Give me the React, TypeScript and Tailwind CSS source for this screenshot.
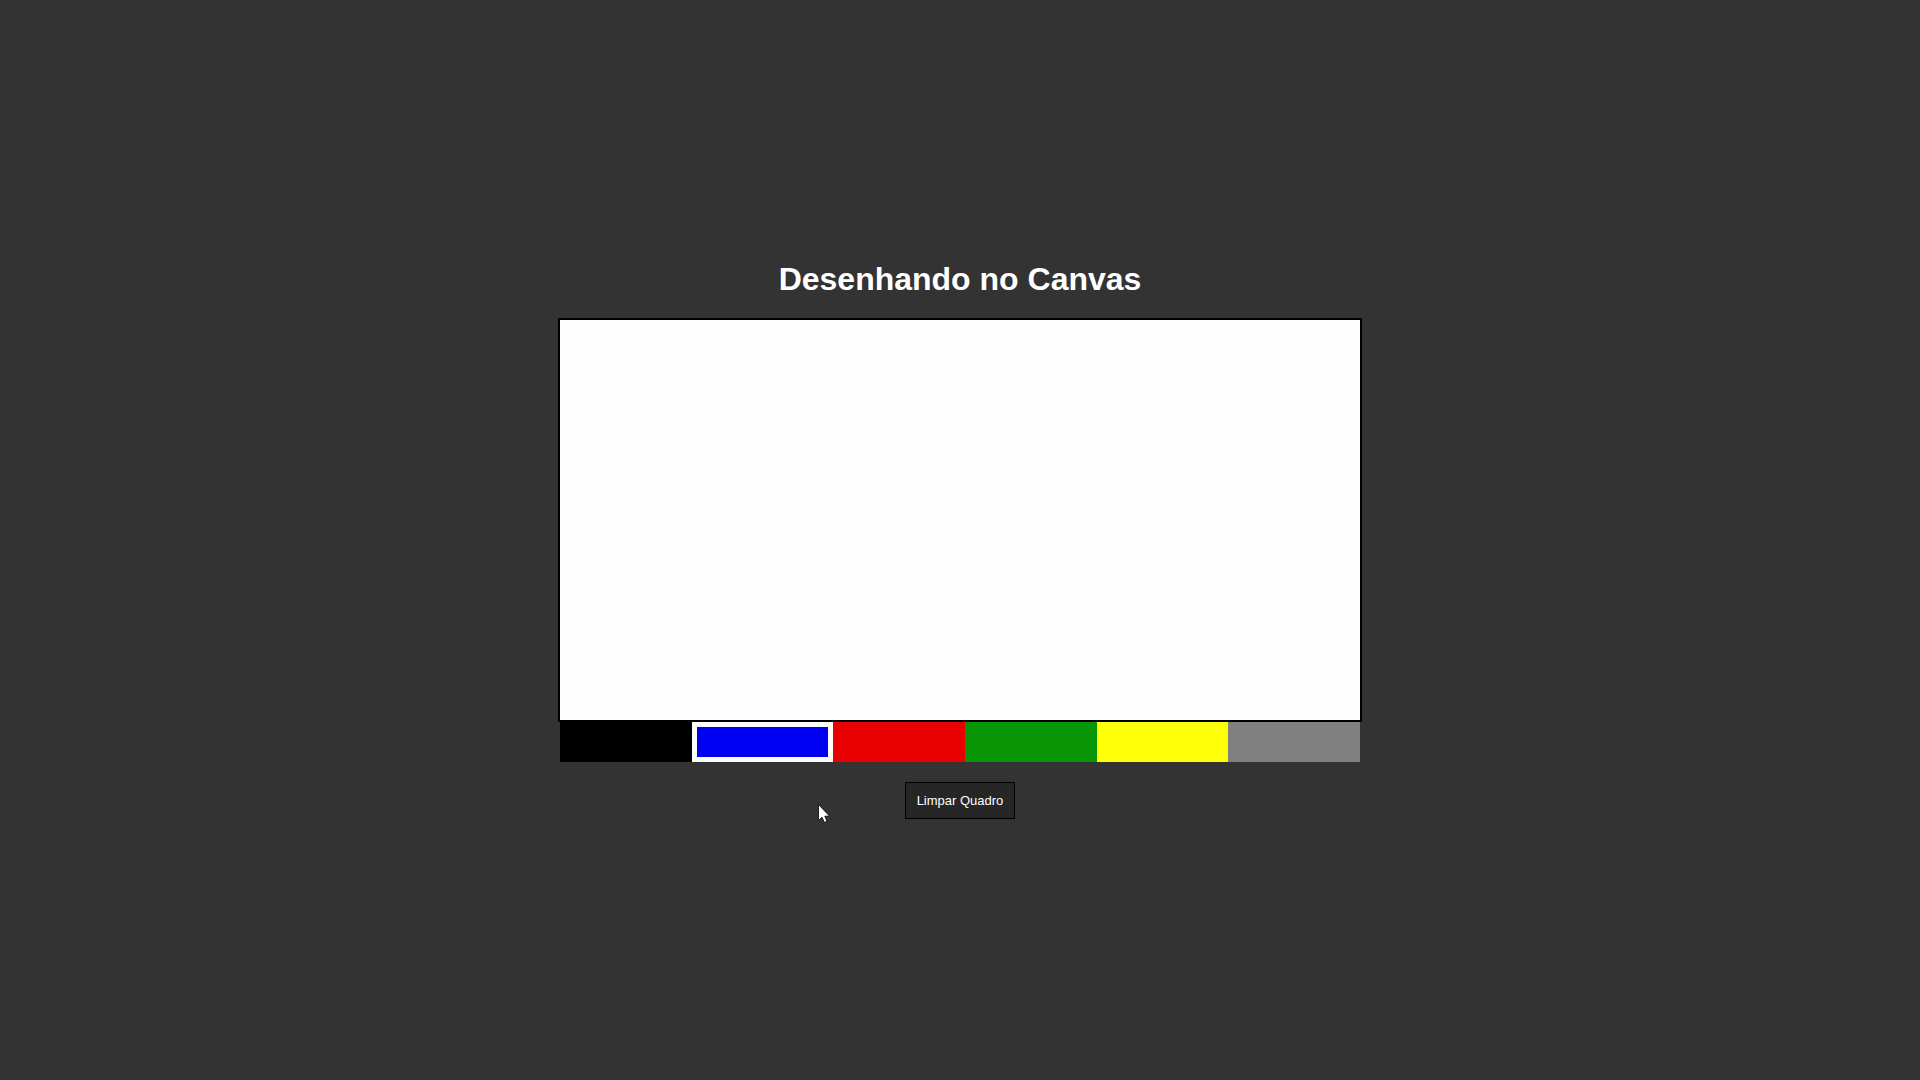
import { useRef, useState } from "react";
import type { PointerEvent } from "react";

const colors = [
  { name: "Preto", value: "#000000", bg: "bg-black" },
  { name: "Azul", value: "#0000f2", bg: "bg-[#0000f2]" },
  { name: "Vermelho", value: "#e90000", bg: "bg-[#e90000]" },
  { name: "Verde", value: "#089606", bg: "bg-[#089606]" },
  { name: "Amarelo", value: "#ffff08", bg: "bg-[#ffff08]" },
  { name: "Cinza", value: "#808080", bg: "bg-[#808080]" },
];

function Pointer() {
  return (
    <svg
      aria-hidden="true"
      className="pointer-events-none absolute top-[543px] left-[260px]"
      width="12"
      height="19"
      viewBox="0 0 12 19"
    >
      <path
        d="M0.5 0.5V16.5L4 13.2L6.4 18.4L9 17.3L6.8 12.2H11.6Z"
        fill="#fff"
        stroke="#000"
        strokeWidth="0.8"
      />
    </svg>
  );
}

export default function App() {
  const [current, setCurrent] = useState(1);
  const canvas = useRef<HTMLCanvasElement>(null);

  const draw = (e: PointerEvent<HTMLCanvasElement>, start: boolean) => {
    const ctx = canvas.current?.getContext("2d");
    if (!ctx || (!start && e.buttons !== 1)) return;
    const { offsetX, offsetY } = e.nativeEvent;
    if (start) {
      ctx.beginPath();
      ctx.moveTo(offsetX, offsetY);
      return;
    }
    ctx.lineWidth = 5;
    ctx.lineJoin = "round";
    ctx.strokeStyle = colors[current].value;
    ctx.lineTo(offsetX, offsetY);
    ctx.stroke();
  };

  const clear = () => {
    canvas.current?.getContext("2d")?.clearRect(0, 0, 800, 400);
  };

  return (
    <main className="flex min-h-screen flex-col items-center justify-center bg-[#333333] font-['Liberation_Sans',Arial,sans-serif] text-white">
      <div className="relative flex w-full max-w-[804px] flex-col items-center">
        <h1 className="mb-5 text-[32px] leading-[37px] font-bold">Desenhando no Canvas</h1>
        <canvas
          ref={canvas}
          width={800}
          height={400}
          aria-label="Quadro de desenho"
          className="box-content block border-2 border-black bg-[#fdfdfd]"
          onPointerDown={(e) => draw(e, true)}
          onPointerMove={(e) => draw(e, false)}
        />
        <div className="flex h-10 w-full px-0.5">
          {colors.map((c, i) => (
            <button
              key={c.name}
              type="button"
              aria-label={c.name}
              aria-pressed={i === current}
              onClick={() => setCurrent(i)}
              className={`flex-1 cursor-pointer ${c.bg} ${i === current ? "border-[5px] border-[#fdfdfd]" : ""}`}
            />
          ))}
        </div>
        <button
          type="button"
          onClick={clear}
          className="mt-5 cursor-pointer border border-black bg-[#262626] px-[11px] py-[10px] text-[13px] leading-[15px]"
        >
          Limpar Quadro
        </button>
        <Pointer />
      </div>
    </main>
  );
}
